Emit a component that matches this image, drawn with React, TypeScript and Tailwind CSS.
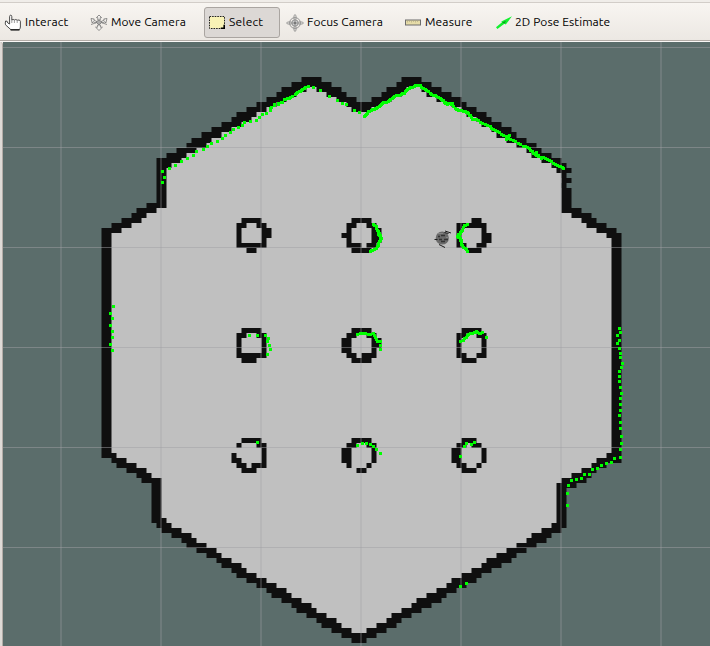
import type { ReactNode } from "react";

// Occupied runs of the occupancy grid: [firstRow, lastRow, start, end, start, end, ...]
const WALLS: number[][] = [
  [0, 0, 40, 44, 60, 64],
  [1, 1, 38, 46, 59, 66],
  [2, 2, 36, 41, 43, 48, 57, 61, 64, 68],
  [3, 3, 35, 39, 45, 49, 56, 60, 65, 70],
  [4, 4, 33, 37, 47, 51, 54, 58, 67, 72],
  [5, 5, 31, 35, 49, 56, 70, 73],
  [6, 6, 29, 33, 50, 54, 72, 75],
  [7, 7, 27, 31, 73, 77],
  [8, 8, 26, 30, 75, 78],
  [9, 9, 24, 28, 76, 80],
  [10, 10, 22, 26, 78, 82],
  [11, 11, 20, 24, 79, 83],
  [12, 12, 18, 22, 81, 85],
  [13, 13, 17, 21, 83, 87],
  [14, 14, 15, 19, 85, 88],
  [15, 15, 13, 17, 86, 90],
  [16, 16, 11, 16, 88, 92],
  [17, 17, 11, 14, 90, 93],
  [18, 18, 11, 13, 91, 94],
  [19, 19, 11, 13, 92, 93],
  [20, 20, 11, 13, 92, 94],
  [21, 21, 11, 13, 92, 93],
  [22, 24, 11, 13, 92, 94],
  [25, 25, 9, 13, 92, 94],
  [26, 26, 7, 11, 92, 96],
  [27, 27, 6, 9, 94, 98],
  [28, 28, 4, 8, 96, 99],
  [29, 29, 2, 6, 97, 101],
  [30, 30, 0, 4, 99, 103],
  [31, 31, 0, 2, 101, 104],
  [32, 74, 0, 2, 102, 104],
  [75, 75, 0, 3, 101, 104],
  [76, 76, 2, 5, 99, 104],
  [77, 77, 3, 7, 98, 101],
  [78, 78, 5, 9, 96, 99],
  [79, 79, 7, 10, 94, 98],
  [80, 80, 8, 12, 92, 97],
  [81, 81, 10, 12, 91, 95],
  [82, 87, 10, 12, 91, 93],
  [88, 88, 10, 13, 91, 93],
  [89, 89, 11, 14, 90, 93],
  [90, 90, 12, 16, 88, 92],
  [91, 91, 14, 18, 86, 90],
  [92, 92, 16, 19, 85, 89],
  [93, 93, 17, 21, 83, 87],
  [94, 94, 19, 23, 81, 85],
  [95, 95, 21, 24, 79, 83],
  [96, 96, 23, 26, 77, 82],
  [97, 97, 24, 28, 76, 80],
  [98, 98, 26, 29, 74, 78],
  [99, 99, 27, 31, 72, 76],
  [100, 100, 29, 33, 70, 75],
  [101, 101, 31, 35, 69, 73],
  [102, 102, 33, 37, 67, 71],
  [103, 103, 34, 38, 65, 69],
  [104, 104, 36, 40, 63, 68],
  [105, 105, 38, 42, 62, 66],
  [106, 106, 39, 43, 60, 64],
  [107, 107, 41, 45, 58, 62],
  [108, 108, 43, 47, 57, 60],
  [109, 109, 44, 48, 55, 59],
  [110, 110, 46, 50, 53, 57],
  [111, 111, 48, 55],
  [112, 112, 50, 53],
];

const PILLARS: number[][] = [
  [28, 28, 28, 32, 50, 54, 74, 76],
  [29, 29, 27, 29, 31, 33, 49, 51, 53, 55, 71, 77],
  [30, 30, 27, 28, 32, 34, 49, 50, 54, 56, 71, 72, 76, 77],
  [31, 31, 27, 28, 32, 34, 48, 50, 54, 56, 71, 72, 76, 78],
  [32, 32, 27, 28, 32, 33, 49, 50, 54, 56, 71, 72, 76, 78],
  [33, 33, 27, 33, 49, 52, 53, 55, 71, 73, 75, 77],
  [34, 34, 29, 31, 50, 54, 73, 76],
  [50, 50, 28, 32, 50, 54, 72, 76],
  [51, 51, 27, 29, 31, 33, 49, 51, 53, 55, 71, 73, 75, 77],
  [52, 52, 27, 28, 32, 33, 48, 50, 54, 56, 71, 72, 76, 77],
  [53, 53, 27, 28, 32, 33, 48, 50, 54, 56, 71, 72, 76, 77],
  [54, 54, 27, 28, 32, 33, 48, 50, 54, 55, 71, 72, 76, 77],
  [55, 55, 27, 33, 49, 51, 52, 55, 71, 73, 75, 77],
  [56, 56, 28, 31, 50, 54, 72, 75],
  [72, 72, 28, 32, 50, 54, 72, 75],
  [73, 73, 27, 28, 31, 33, 49, 51, 53, 55, 71, 73, 74, 76],
  [74, 74, 32, 33, 48, 50, 54, 55, 70, 72, 76, 77],
  [75, 75, 26, 27, 32, 33, 48, 50, 54, 55, 70, 72, 76, 77],
  [76, 76, 26, 28, 32, 33, 48, 50, 54, 55, 70, 72, 76, 77],
  [77, 77, 27, 29, 30, 33, 49, 50, 53, 54, 71, 73, 75, 76],
  [78, 78, 28, 31, 51, 53, 72, 75],
];

const rowTop = (r: number) => (r < 12 ? 77 : 78) + 5 * r;
const colLeft = (k: number) => 101.5 + 5 * k;
const box = (r0: number, r1: number, a: number, b: number) =>
  `M${colLeft(a)} ${rowTop(r0)}H${colLeft(b)}V${rowTop(r1 + 1)}H${colLeft(a)}Z`;

const runs = (rows: number[][]) =>
  rows
    .map(([r0, r1, ...s]) => {
      let d = "";
      for (let i = 0; i < s.length; i += 2) d += box(r0, r1, s[i], s[i + 1]);
      return d;
    })
    .join("");

const freeSpace = WALLS.map(([r0, r1, ...s]) => {
  if (r0 < 2) return "";
  if (r0 < 5) return box(r0, r1, s[0] + 1, s[3] - 1) + box(r0, r1, s[4] + 1, s[7] - 1);
  return box(r0, r1, s[0] + 1, s[s.length - 1] - 1);
}).join("");

// Laser returns, grouped by scan patch: offset of the patch, then points in thirds of a pixel.
type Patch = { x: number; y: number; pts: number[] };

const HITS: Patch[] = [
  { x: 90, y: 70, pts: [216,304,222,322,218,337,239,295,257,286,275,274,293,265,309,256,318,244,339,238,353,229,365,220,383,214,396,205,407,196,420,187,429,178,444,172,456,165,464,157,482,154,498,151,507,142,516,133,530,130,540,121,543,112,554,106,566,103,578,97,587,88,597,85] },
  { x: 270, y: 70, pts: [2,116,14,104,25,101,35,97,42,89,52,86,60,81,68,78,76,74,83,67,91,64,98,58,106,52,114,48,129,52,150,62,177,79,201,91,216,100,230,103,254,121,267,127] },
  { x: 90, y: 290, pts: [69,49,62,70,66,85,62,106,66,124,66,142,62,163,66,181,479,136,503,136,525,136,534,145,533,154,537,167,540,178,533,193,501,457] },
  { x: 320, y: 310, pts: [180,106,180,118,420,94,498,82,113,406,128,400,140,400,152,403,161,409,170,418,180,430,422,439,432,409,440,400,453,403,462,397] },
  { x: 500, y: 310, pts: [357,55,360,67,353,76,357,92,353,100,357,115,360,130,360,142,366,160,363,172,357,184,357,199,357,214,360,232,363,250,360,265,360,283,360,301,357,316,360,337,360,355,363,379,363,400,360,418,360,442,342,445,333,457,318,460,303,466,291,475,276,478,269,493,252,493,243,505,228,508,213,511,204,526,201,550,201,586] },
  { x: 280, y: 540, pts: [540,139,558,130] },
];

const TRAILS: Patch[] = [
  { x: 270, y: 70, pts: [76,74,83,67,91,64,98,58,106,52] },
  { x: 270, y: 70, pts: [284,140,290,134,296,125,303,121,312,118,320,115,327,110,333,104,340,98,350,97,358,91,366,86,374,79,384,76,394,74,402,69,409,62,418,56,427,51,437,47,450,46,460,56,470,62,480,69,490,75,500,80,510,86,520,92,530,101,545,102,555,114,566,120,580,124,592,127,597,135] },
  { x: 440, y: 70, pts: [3,88,12,96,22,102,38,101,45,116,58,120,70,124,80,127,90,135,98,148,110,148,120,157,135,162,150,170,160,179,172,183,185,192,198,200,205,204,220,212,235,219,250,228,262,233,272,240,280,250,290,257,303,261,316,265,328,272,340,279,352,286,362,290,371,296] },
  { x: 270, y: 70, pts: [309,463,318,468,322,480,328,490,333,505,328,515,325,526,318,535,308,540,300,545] },
  { x: 270, y: 70, pts: [324,484,326,494,330,500,330,512] },
  { x: 440, y: 70, pts: [82,463,72,467,66,480,60,490,52,498,60,505,63,518,68,527,75,535,82,543] },
  { x: 440, y: 70, pts: [64,484,58,492,58,500,64,510] },
  { x: 320, y: 310, pts: [113,73,128,70,145,73,160,71,167,82,172,94,180,95] },
  { x: 320, y: 310, pts: [430,90,438,81,445,73,458,69,468,65,478,70,487,68] },
  { x: 440, y: 70, pts: [198,208,208,196] },
  { x: 440, y: 70, pts: [290,248,303,265] },
];

const dot = (px: number, py: number) => `M${Math.round(px) - 1} ${Math.round(py) - 1}h3v3h-3z`;

const hitPath = HITS.map(({ x, y, pts }) => {
  let d = "";
  for (let i = 0; i < pts.length; i += 2) d += dot(x + (pts[i] - 1.5) / 3, y + (pts[i + 1] - 1.5) / 3);
  return d;
}).join("");

const trailPath = TRAILS.map(({ x, y, pts }) => {
  let d = "";
  for (let i = 0; i + 3 < pts.length; i += 2) {
    for (let t = 0; t <= 1; t += 0.5) {
      const px = pts[i] + (pts[i + 2] - pts[i]) * t;
      const py = pts[i + 1] + (pts[i + 3] - pts[i + 1]) * t;
      d += dot(x + (px - 1.5) / 3, y + (py - 1.5) / 3);
    }
  }
  return d;
}).join("");

function MapView() {
  return (
    <svg className="block h-[604px] w-[707px]" viewBox="3 42 707 604">
      <rect x="3" y="42" width="707" height="604" fill="#5b6d6b" />
      <path d={freeSpace} fill="#c0c0c0" />
      <path d={runs(WALLS) + runs(PILLARS)} fill="#0f0f0f" />
      <g fill="#a0a0a4">
        {[60, 160, 260, 360, 460, 560, 660].map((x) => (
          <rect key={x} x={x} y="42" width="2" height="604" opacity="0.28" />
        ))}
        {[47, 147, 247, 347, 447, 547].map((y) => (
          <rect key={y} x="3" y={y} width="707" height="1" opacity="0.5" />
        ))}
      </g>
      <g fill="none">
        <circle cx="442.3" cy="238" r="6.6" fill="#6a6a6a" />
        <path d="M434.5 239.5h3M445 231l6 2M444.5 232.5l4 1M439 244.5l6 3" stroke="#1c1c1c" strokeWidth="1" />
        <path d="M438 236.5h2M441 235.5h4M439 239.5h3M444 239.5h4M441 241.5h4" stroke="#333" strokeWidth="1.3" />
        <path d="M438 233.5h5M446 237.5h2" stroke="#858585" strokeWidth="1" />
      </g>
      <path d={hitPath + trailPath} fill="#00ff00" />
    </svg>
  );
}

const HandIcon = () => (
  <svg className="h-[18px] w-[18px]" viewBox="0 0 18 18">
    <path
      d="M5.6 10V2.6Q5.6 1.2 6.7 1.2T7.8 2.6V6Q9.2 4.8 10.4 6 11.8 4.9 13.2 6.2 16 5.2 16.4 7.3V13Q16.2 14.6 15.2 15.8H7L1.5 10.8Q1 9.2 1.6 7 3.6 6.6 3.8 9Z"
      fill="#fff"
      stroke="#3a3a3a"
      strokeWidth="0.9"
    />
    <path d="M7.8 6V9M10.4 6V9M13.2 6.2V9" stroke="#888" strokeWidth="0.8" />
    <path d="M6.5 15.8H15.5" stroke="#222" strokeWidth="1.4" />
  </svg>
);

const MoveIcon = () => (
  <svg className="h-[18px] w-[18px]" viewBox="0 0 18 18">
    <g fill="#f4f2ef" stroke="#777" strokeWidth="0.8">
      <path d="M9 1L11.6 3.6H10.2V6H7.8V3.6H6.4Z" />
      <path d="M9 16.5L5.6 13.2H7.6V11H10.4V13.2H12.4Z" />
      <path d="M1 4.5L4.3 5 3.7 6.1 6.8 7.5 6.2 9 3 7.7 2.2 9Z" />
      <path d="M17 4.5L13.7 5 14.3 6.1 11.2 7.5 11.8 9 15 7.7 15.8 9Z" />
      <path d="M9 6L12 8 9 11 6 8Z" fill="#aaa" />
      <path d="M1 10.5L6 8.8M17 10.5L12 8.8" fill="none" />
    </g>
  </svg>
);

const SelectIcon = () => (
  <svg className="h-[18px] w-[18px]" viewBox="0 0 18 18">
    <rect x="1.5" y="2.5" width="15" height="12" fill="#f9f3b6" stroke="#222" strokeWidth="1" strokeDasharray="1.6 1" />
    <path d="M17 10.8V15H12.8V13.4H15.4V10.8Z" fill="#000" />
  </svg>
);

const FocusIcon = () => (
  <svg className="h-[18px] w-[18px]" viewBox="0 0 18 18">
    <g fill="none" stroke="#8c8c8c" strokeWidth="0.9">
      <circle cx="9" cy="9" r="5.4" />
      <circle cx="9" cy="9" r="3.2" fill="#ccc" />
      <path d="M9 5V13M5 9H13" />
      <path d="M8 5.5V1.5L9 .6 10 1.5V5.5M8 12.5V16.5L9 17.4 10 16.5V12.5M5.5 8H1.5L.6 9 1.5 10H5.5M12.5 8H16.5L17.4 9 16.5 10H12.5" />
    </g>
    <circle cx="9" cy="9" r="1.2" fill="#777" />
  </svg>
);

const MeasureIcon = () => (
  <svg className="h-[18px] w-[18px]" viewBox="0 0 18 18">
    <rect x="1.5" y="6" width="15" height="5" fill="#e6dca8" stroke="#6c6c6c" />
    <path d="M3.5 7V8.5M5.5 7V8M7.5 7V8.5M9.5 7V8M11.5 7V8.5M13.5 7V8" stroke="#b5ac84" strokeWidth="0.7" />
  </svg>
);

const PoseIcon = () => (
  <svg className="h-[18px] w-[18px]" viewBox="0 0 18 18">
    <path d="M1 13.2L7 8.2 6.3 7.4 17 2.2 10.8 10.6 9.4 9.8 2.4 15Z" fill="#12f02f" />
    <path d="M7 8.6L11 6.8 9.6 9.4Z" fill="#0a9a1c" />
  </svg>
);

function Tool({ icon, label, place, text, active = false }: { icon: ReactNode; label: string; place: string; text: string; active?: boolean }) {
  return (
    <button
      className={`flex h-[31px] shrink-0 items-center rounded-[3px] border pl-[3px] ${place} ${
        active ? "border-[#aaa5a1] bg-[#dcd8d5]" : "border-transparent"
      }`}
    >
      {icon}
      <span className={`whitespace-nowrap pb-px text-left text-[12px] leading-[16px] text-black ${text}`}>{label}</span>
    </button>
  );
}

export default function App() {
  return (
    <div className="flex h-[646px] w-[710px] flex-col overflow-hidden bg-[#f0ede9] font-['Ubuntu','Open_Sans','Noto_Sans',sans-serif]">
      <div className="h-[3px] shrink-0 border-b border-[#d2cdc8] bg-[#f0ede9]" />
      <div className="flex h-[38px] shrink-0 items-start border-b border-[#b3aca7] bg-gradient-to-b from-[#f8f5f1] to-[#ece8e3] pt-[4px]">
        <Tool icon={<HandIcon />} label="Interact" place="w-[86px]" text="ml-[3px] tracking-[0.15px]" />
        <Tool icon={<MoveIcon />} label="Move Camera" place="w-[118px]" text="ml-[3px] tracking-[0.1px]" />
        <Tool icon={<SelectIcon />} label="Select" place="w-[76px]" text="ml-[3px] tracking-[0.2px]" active />
        <Tool icon={<FocusIcon />} label="Focus Camera" place="ml-[2px] w-[118px]" text="ml-[3px] tracking-[0.08px]" />
        <Tool icon={<MeasureIcon />} label="Measure" place="w-[91px]" text="ml-[3px] tracking-[0.15px]" />
        <Tool icon={<PoseIcon />} label="2D Pose Estimate" place="w-[130px]" text="ml-[2px] tracking-[0.08px]" />
      </div>
      <div className="h-px shrink-0 bg-[#faf8f6]" />
      <div className="flex shrink-0">
        <div className="h-[604px] w-[3px] shrink-0 rounded-tr-sm border-r border-[#b3aca7] bg-[#dfdbd7]" />
        <MapView />
      </div>
    </div>
  );
}
